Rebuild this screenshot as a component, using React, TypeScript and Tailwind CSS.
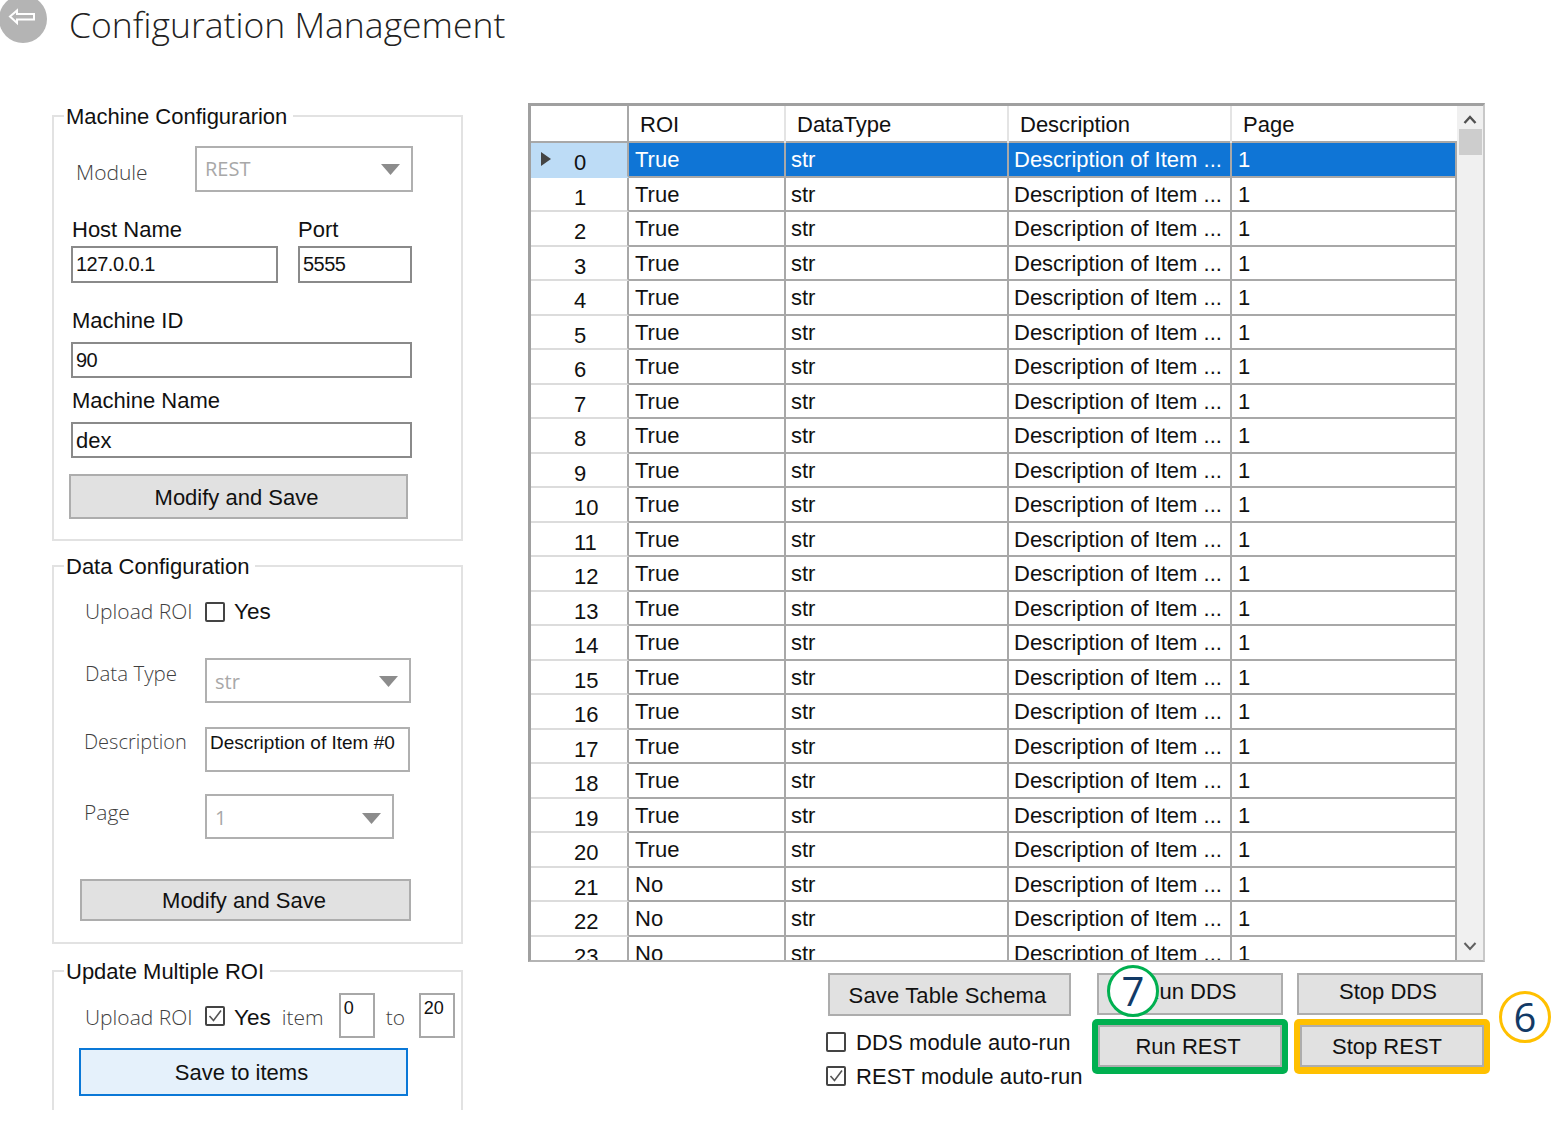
import React from 'react';

const LIGHT = "font-['Open_Sans',sans-serif] font-light text-[#3f3f3f]";

const rows = Array.from({ length: 24 }, (_, i) => ({
  id: i,
  roi: i <= 20 ? 'True' : 'No',
}));

const BackArrow = () => (
  <svg width="48" height="48" viewBox="0 0 48 48" className="block">
    <circle cx="24" cy="24" r="24" fill="#b4b4b4" />
    <path
      d="M11 21.5 L18 15.5 V19 H35 V24.5 H18 V28 Z"
      fill="none"
      stroke="#ffffff"
      strokeWidth="2"
      strokeLinejoin="miter"
    />
  </svg>
);

const Caret = () => (
  <svg width="19" height="11" viewBox="0 0 19 11" className="block">
    <path d="M0 0 H19 L9.5 11 Z" fill="#8c8c8c" />
  </svg>
);

const Check = ({ checked }: { checked?: boolean }) => (
  <span className="block w-[20px] h-[20px] border-2 border-[#444444] rounded-[2px] bg-white shrink-0">
    {checked && (
      <svg width="16" height="16" viewBox="0 0 16 16" className="block">
        <path d="M2.5 8 L6.5 12.5 L14 2.5" fill="none" stroke="#555555" strokeWidth="1.6" />
      </svg>
    )}
  </span>
);

const Select = ({ value, className }: { value: string; className: string }) => (
  <div className={`flex items-center justify-between border-2 border-[#b0b0b0] pl-[8px] pr-[11px] ${className}`}>
    <span className="font-['Open_Sans',sans-serif] font-normal text-[20px] text-[#a8a8a8]">{value}</span>
    <Caret />
  </div>
);

const TextBox = ({ value, className }: { value: string; className: string }) => (
  <div className={`border-2 border-[#8a8a8a] pl-[3px] leading-[33px] ${className}`}>{value}</div>
);

const GreyButton = ({ label, className }: { label: string; className: string }) => (
  <div className={`flex items-center justify-center bg-[#e1e1e1] border-2 border-[#adadad] text-[22px] text-[#111111] ${className}`}>
    {label}
  </div>
);

const Group = ({ title, className, children }: { title: string; className: string; children: React.ReactNode }) => (
  <div className={`relative w-[411px] border-2 border-[#e2e2e2] ${className}`}>
    <span className="absolute left-[10px] -top-[12px] bg-white px-[2px] pr-[6px] text-[22px] leading-[24px]">{title}</span>
    {children}
  </div>
);

const MachineGroup = () => (
  <Group title="Machine Configurarion" className="h-[426px] pl-[17px] pt-[29px]">
    <div className="flex items-center">
      <span className={`${LIGHT} ml-[5px] w-[119px] text-[21px] mt-[8px]`}>Module</span>
      <Select value="REST" className="w-[218px] h-[46px]" />
    </div>
    <div className="flex mt-[23px] text-[22px] leading-[30px]">
      <span className="ml-[1px] w-[226px]">Host Name</span>
      <span>Port</span>
    </div>
    <div className="flex mt-[1px]">
      <TextBox value="127.0.0.1" className="w-[207px] h-[37px] text-[20px] tracking-[-0.5px]" />
      <TextBox value="5555" className="w-[114px] h-[37px] ml-[20px] text-[20px] tracking-[-0.5px]" />
    </div>
    <div className="ml-[1px] mt-[23px] text-[22px] leading-[30px]">Machine ID</div>
    <TextBox value="90" className="w-[341px] h-[36px] mt-[6px] text-[20px] tracking-[-0.5px]" />
    <div className="ml-[1px] mt-[8px] text-[22px] leading-[30px]">Machine Name</div>
    <TextBox value="dex" className="w-[341px] h-[36px] mt-[6px] text-[22px]" />
    <GreyButton label="Modify and Save" className="w-[339px] h-[45px] mt-[16px] -ml-[2px] pr-[4px] pt-[1px]" />
  </Group>
);

const DataGroup = () => (
  <Group title="Data Configuration" className="h-[379px] mt-[24px] pl-[31px] pt-[35px]">
    <div className="flex items-center h-[20px]">
      <span className={`${LIGHT} w-[120px] text-[21px]`}>Upload ROI</span>
      <Check />
      <span className="ml-[9px] text-[22.5px]">Yes</span>
    </div>
    <div className="flex mt-[36px]">
      <span className={`${LIGHT} w-[120px] text-[20.5px] leading-[30px]`}>Data Type</span>
      <Select value="str" className="w-[206px] h-[45px] pt-[2px]" />
    </div>
    <div className="flex mt-[24px]">
      <span className={`${LIGHT} -ml-[1px] w-[121px] text-[20px] leading-[30px]`}>Description</span>
      <div className="w-[205px] h-[45px] border-2 border-[#b0b0b0] pl-[3px] text-[19px] leading-[28px]">Description of Item #0</div>
    </div>
    <div className="flex mt-[22px]">
      <span className={`${LIGHT} -ml-[1px] w-[121px] text-[21px] leading-[36px]`}>Page</span>
      <Select value="1" className="w-[189px] h-[45px] pt-[3px]" />
    </div>
    <GreyButton label="Modify and Save" className="w-[331px] h-[42px] mt-[40px] -ml-[5px] pr-[3px]" />
  </Group>
);

const MultiGroup = () => (
  <Group title="Update Multiple ROI" className="h-[140px] mt-[26px] pl-[31px] pt-[21px] border-b-0">
    <div className="flex items-center h-[45px]">
      <span className={`${LIGHT} w-[120px] text-[21px] mt-[4px]`}>Upload ROI</span>
      <Check checked />
      <span className="ml-[9px] text-[22.5px] mt-[4px]">Yes</span>
      <span className={`${LIGHT} ml-[11px] w-[57px] text-[21px] mt-[4px]`}>item</span>
      <div className="w-[36px] h-[45px] border-2 border-[#a8a8a8] pl-[3px] text-[18px] leading-[26px]">0</div>
      <span className={`${LIGHT} ml-[11px] w-[33px] text-[21px] mt-[4px]`}>to</span>
      <div className="w-[36px] h-[45px] border-2 border-[#a8a8a8] pl-[3px] text-[18px] leading-[26px]">20</div>
    </div>
    <div className="flex items-center justify-center w-[329px] h-[48px] mt-[10px] -ml-[6px] pr-[4px] bg-[#e5f1fb] border-2 border-[#0a78d7] text-[22px]">
      Save to items
    </div>
  </Group>
);

const DataTable = () => (
  <div className="flex w-[957px] h-[859px] border-t-[3px] border-l-[3px] border-r-2 border-b-2 border-t-[#a0a0a0] border-l-[#a0a0a0] border-r-[#c8c8c8] border-b-[#b4b4b4]">
    <div className="w-[926px] h-full overflow-hidden">
      <div className="grid grid-cols-[98px_157px_223px_223px_225px] h-[37px] text-[22px] leading-[37px] border-b-2 border-[#a8a8a8]">
        <div className="border-r-2 border-[#a8a8a8]" />
        <div className="pl-[11px] border-r-2 border-[#e4e4e4]">ROI</div>
        <div className="pl-[11px] border-r-2 border-[#e4e4e4]">DataType</div>
        <div className="pl-[11px] border-r-2 border-[#e4e4e4]">Description</div>
        <div className="pl-[11px]">Page</div>
      </div>
      {rows.map((r) => {
        const sel = r.id === 0;
        const line = 'border-r-2 border-b-2 border-[#a8a8a8]';
        return (
          <div
            key={r.id}
            className={`grid grid-cols-[98px_157px_223px_223px_225px] grid-rows-[34.5px] h-[34.5px] text-[22px] leading-[34px] ${sel ? 'bg-[#0f75d6] text-white' : 'text-[#111111]'}`}
          >
            <div className={`relative pt-[3px] pl-[43px] text-[#111111] border-r-2 border-[#a8a8a8] border-b-2 ${sel ? 'bg-[#bddcf6] border-b-[#bddcf6]' : 'bg-white border-b-[#dcdcdc]'}`}>
              {sel && (
                <svg width="10" height="14" viewBox="0 0 10 14" className="absolute left-[10px] top-[9px]">
                  <path d="M0 0 L10 7 L0 14 Z" fill="#444444" />
                </svg>
              )}
              {r.id}
            </div>
            <div className={`pl-[6px] ${line}`}>{r.roi}</div>
            <div className={`pl-[5px] ${line}`}>str</div>
            <div className={`pl-[5px] ${line}`}>Description of Item ...</div>
            <div className={`pl-[6px] ${line}`}>1</div>
          </div>
        );
      })}
    </div>
    <div className="flex-1 flex flex-col items-center bg-[#f0f0f0]">
      <svg width="14" height="9" viewBox="0 0 14 9" className="mt-[9px]">
        <path d="M1.5 8 L7 2 L12.5 8" fill="none" stroke="#505050" strokeWidth="2.4" />
      </svg>
      <div className="w-[23px] h-[26px] mt-[5px] bg-[#cdcdcd]" />
      <svg width="14" height="9" viewBox="0 0 14 9" className="mt-auto mb-[9px]">
        <path d="M1.5 1 L7 7 L12.5 1" fill="none" stroke="#606060" strokeWidth="2" />
      </svg>
    </div>
  </div>
);

const BottomControls = () => (
  <div className="relative flex ml-[298px]">
    <div className="w-[266px] pt-[11px]">
      <GreyButton label="Save Table Schema" className="w-[243px] h-[43px] ml-[2px] pr-[4px] pt-[1px] tracking-[0.15px]" />
      <div className="flex items-center h-[20px] mt-[16px] text-[22px] tracking-[0.1px]">
        <Check />
        <span className="ml-[10px]">DDS module auto-run</span>
      </div>
      <div className="flex items-center h-[20px] mt-[14px] text-[22px] tracking-[0.1px]">
        <Check checked />
        <span className="ml-[10px]">REST module auto-run</span>
      </div>
    </div>
    <div className="grid grid-cols-[196px_196px] gap-x-[6px] content-start pt-[11px]">
      <div className="pl-[5px]">
        <GreyButton label="Run DDS" className="w-[186px] h-[42px] pb-[5px]" />
      </div>
      <div className="pl-[3px]">
        <GreyButton label="Stop DDS" className="w-[186px] h-[42px] pb-[5px] pr-[4px]" />
      </div>
      <div className="mt-[4px] h-[55px] bg-[#00b050] rounded-[5px] p-[6px] pb-[7px]">
        <GreyButton label="Run REST" className="w-full h-full pr-[4px]" />
      </div>
      <div className="mt-[4px] h-[55px] bg-[#ffc000] rounded-[5px] p-[6px] pb-[7px]">
        <GreyButton label="Stop REST" className="w-full h-full pr-[10px]" />
      </div>
    </div>
    <div className="absolute left-[281px] top-[3px] flex items-center justify-center w-[52px] h-[52px] rounded-full border-[3px] border-[#00b050] bg-white font-['Open_Sans',sans-serif] text-[40px] text-[#123a66]">
      7
    </div>
    <div className="absolute left-[673px] top-[29px] flex items-center justify-center w-[52px] h-[52px] rounded-full border-[3px] border-[#ffc000] bg-white font-['Open_Sans',sans-serif] text-[40px] text-[#123a66]">
      6
    </div>
  </div>
);

export default function App() {
  return (
    <div className="w-[1559px] h-[1125px] overflow-hidden bg-white text-[#111111] font-['Liberation_Sans',Arial,sans-serif]">
      <div className="flex h-[103px]">
        <div className="-ml-[1px] -mt-[5px]">
          <BackArrow />
        </div>
        <h1 className="ml-[22px] -mt-[3px] font-['Open_Sans',sans-serif] font-light text-[35.5px] leading-[55px] text-[#222222]">
          Configuration Management
        </h1>
      </div>
      <div className="flex pl-[52px]">
        <div className="w-[411px] pt-[12px]">
          <MachineGroup />
          <DataGroup />
          <MultiGroup />
        </div>
        <div className="ml-[65px]">
          <DataTable />
          <BottomControls />
        </div>
      </div>
    </div>
  );
}
